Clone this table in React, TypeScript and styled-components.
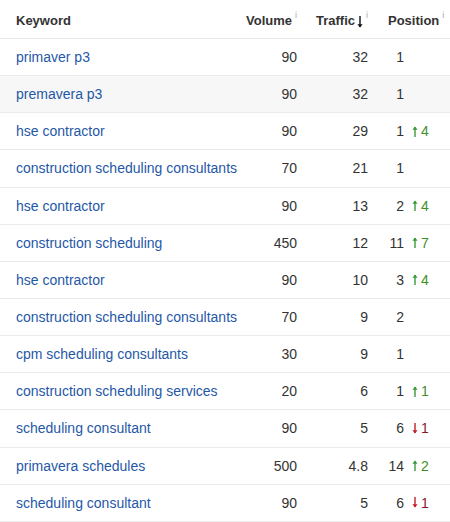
import styled, { createGlobalStyle } from 'styled-components';

type Change = { dir: 'up' | 'down'; value: number };
type KeywordRow = {
  keyword: string;
  volume: number;
  traffic: string;
  position: number;
  change?: Change;
};

const rows: KeywordRow[] = [
  { keyword: 'primaver p3', volume: 90, traffic: '32', position: 1 },
  { keyword: 'premavera p3', volume: 90, traffic: '32', position: 1 },
  { keyword: 'hse contractor', volume: 90, traffic: '29', position: 1, change: { dir: 'up', value: 4 } },
  { keyword: 'construction scheduling consultants', volume: 70, traffic: '21', position: 1 },
  { keyword: 'hse contractor', volume: 90, traffic: '13', position: 2, change: { dir: 'up', value: 4 } },
  { keyword: 'construction scheduling', volume: 450, traffic: '12', position: 11, change: { dir: 'up', value: 7 } },
  { keyword: 'hse contractor', volume: 90, traffic: '10', position: 3, change: { dir: 'up', value: 4 } },
  { keyword: 'construction scheduling consultants', volume: 70, traffic: '9', position: 2 },
  { keyword: 'cpm scheduling consultants', volume: 30, traffic: '9', position: 1 },
  { keyword: 'construction scheduling services', volume: 20, traffic: '6', position: 1, change: { dir: 'up', value: 1 } },
  { keyword: 'scheduling consultant', volume: 90, traffic: '5', position: 6, change: { dir: 'down', value: 1 } },
  { keyword: 'primavera schedules', volume: 500, traffic: '4.8', position: 14, change: { dir: 'up', value: 2 } },
  { keyword: 'scheduling consultant', volume: 90, traffic: '5', position: 6, change: { dir: 'down', value: 1 } },
];

const GlobalStyle = createGlobalStyle`
  body {
    margin: 0;
    background: #ffffff;
    font-family: "Liberation Sans", Arial, sans-serif;
    color: #333333;
  }
`;

const Arrow = ({ dir, color, h = 11 }: { dir: 'up' | 'down'; color: string; h?: number }) => (
  <svg width="6" height={h} viewBox={`0 0 6 ${h}`}>
    {dir === 'up' ? (
      <>
        <path d={`M3 1 L3 ${h}`} stroke={color} strokeWidth="1.4" />
        <path d="M0.4 3.8 L3 0.6 L5.6 3.8 Z" fill={color} />
      </>
    ) : (
      <>
        <path d={`M3 0 L3 ${h - 1}`} stroke={color} strokeWidth="1.4" />
        <path d={`M0.4 ${h - 3.8} L3 ${h - 0.6} L5.6 ${h - 3.8} Z`} fill={color} />
      </>
    )}
  </svg>
);

const App = () => {
  return (
    <>
      <GlobalStyle />
      <Table>
        <HeaderRow>
          <HeadCell>Keyword</HeadCell>
          <HeadCell align="right">
            Volume<Info>i</Info>
          </HeadCell>
          <HeadCell align="right">
            Traffic
            <SortIcon>
              <Arrow dir="down" color="#111" h={12} />
            </SortIcon>
            <Info>i</Info>
          </HeadCell>
          <HeadCell indent>
            Position<Info>i</Info>
          </HeadCell>
        </HeaderRow>
        {rows.map((r, i) => (
          <Row key={i} highlighted={i === 1}>
            <KeywordLink>{r.keyword}</KeywordLink>
            <Num>{r.volume}</Num>
            <Num>{r.traffic}</Num>
            <PositionCell>
              <PosNum>{r.position}</PosNum>
              {r.change && (
                <ChangeTag dir={r.change.dir}>
                  <Arrow
                    dir={r.change.dir}
                    color={r.change.dir === 'up' ? '#3a9a3a' : '#c0202a'}
                  />
                  {r.change.value}
                </ChangeTag>
              )}
            </PositionCell>
          </Row>
        ))}
      </Table>
    </>
  );
};

export default App;

const Table = styled.div`
  width: 450px;
  display: flex;
  flex-direction: column;
`;

const grid = `
  display: grid;
  grid-template-columns: 221px 60px 71px 1fr;
  align-items: center;
  padding-left: 16px;
  box-sizing: border-box;
`;

const HeaderRow = styled.div`
  ${grid}
  height: 39px;
  padding-top: 2px;
  border-bottom: 1px solid #e6e6e6;
`;

const HeadCell = styled.div<{ align?: 'right'; indent?: boolean }>`
  display: flex;
  align-items: center;
  justify-content: ${(p) => (p.align === 'right' ? 'flex-end' : 'flex-start')};
  padding-left: ${(p) => (p.indent ? '20px' : '0')};
  font-size: 13px;
  font-weight: bold;
  color: #333333;
  white-space: nowrap;
`;

const Info = styled.span`
  align-self: flex-start;
  margin-left: 3px;
  margin-top: -3px;
  font-size: 9px;
  font-weight: normal;
  color: #aaaaaa;
`;

const SortIcon = styled.span`
  display: inline-flex;
  margin-left: 2px;
  margin-top: 3px;
`;

const Row = styled.div<{ highlighted?: boolean }>`
  ${grid}
  height: 37.15px;
  border-bottom: 1px solid #ebebeb;
  background: ${(p) => (p.highlighted ? '#f7f7f7' : '#ffffff')};
  font-size: 14px;
`;

const KeywordLink = styled.a`
  color: #1f58a6;
  text-decoration: none;
  white-space: nowrap;
  cursor: pointer;
`;

const Num = styled.div`
  text-align: right;
  color: #333333;
`;

const PositionCell = styled.div`
  display: flex;
  align-items: center;
  padding-left: 20px;
  gap: 8px;
`;

const PosNum = styled.span`
  min-width: 16px;
  text-align: right;
  color: #333333;
`;

const ChangeTag = styled.span<{ dir: 'up' | 'down' }>`
  display: inline-flex;
  align-items: center;
  gap: 3px;
  color: ${(p) => (p.dir === 'up' ? '#3f8f26' : '#8a1a2a')};
`;
